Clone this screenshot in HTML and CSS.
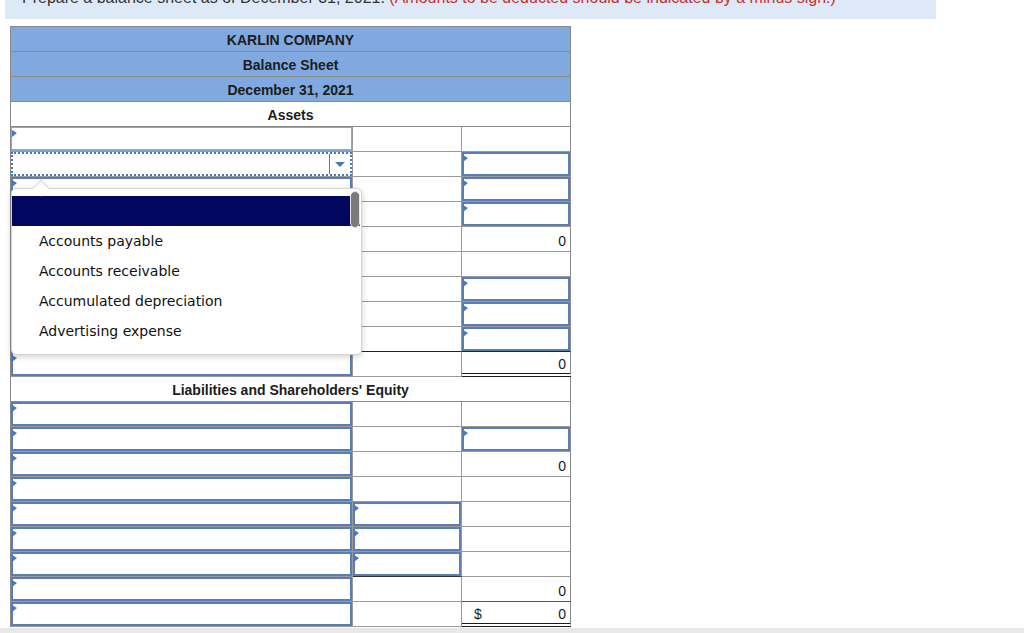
FILE: index.html
```html
<!doctype html>
<html lang="en">
  <head>
    <meta charset="UTF-8" />
    <meta name="viewport" content="width=device-width, initial-scale=1.0" />
    <title>Balance Sheet</title>
    <link rel="stylesheet" href="styles.css">
  </head>
  <body>
    <div class="prompt">
      <p>
        <span class="ask">Prepare a balance sheet as of December 31, 2021.</span>
        <span class="note">(Amounts to be deducted should be indicated by a minus sign.)</span>
      </p>
    </div>

    <div class="sheet-wrap">
      <div class="sheet">
        <div class="row head fill">KARLIN COMPANY</div>
        <div class="row head fill">Balance Sheet</div>
        <div class="row head fill">December 31, 2021</div>
        <div class="row head">Assets</div>

        <!-- assets -->
        <div class="row">
          <div class="cell"><div class="field light"></div></div>
          <div class="cell"></div>
          <div class="cell"></div>
        </div>
        <div class="row">
          <div class="cell">
            <div class="select">
              <div class="select-value"></div>
              <div class="select-arrow"><span></span></div>
            </div>
          </div>
          <div class="cell"></div>
          <div class="cell"><div class="field"></div></div>
        </div>
        <div class="row">
          <div class="cell"><div class="field"></div></div>
          <div class="cell"></div>
          <div class="cell"><div class="field"></div></div>
        </div>
        <div class="row">
          <div class="cell"><div class="field"></div></div>
          <div class="cell"></div>
          <div class="cell"><div class="field"></div></div>
        </div>
        <div class="row">
          <div class="cell"><div class="field"></div></div>
          <div class="cell"></div>
          <div class="cell num">0</div>
        </div>
        <div class="row">
          <div class="cell"><div class="field"></div></div>
          <div class="cell"></div>
          <div class="cell"></div>
        </div>
        <div class="row">
          <div class="cell"><div class="field"></div></div>
          <div class="cell"></div>
          <div class="cell"><div class="field"></div></div>
        </div>
        <div class="row">
          <div class="cell"><div class="field"></div></div>
          <div class="cell"></div>
          <div class="cell"><div class="field"></div></div>
        </div>
        <div class="row closing">
          <div class="cell"><div class="field"></div></div>
          <div class="cell"></div>
          <div class="cell"><div class="field"></div></div>
        </div>
        <div class="row">
          <div class="cell"><div class="field"></div></div>
          <div class="cell"></div>
          <div class="cell num total">0</div>
        </div>

        <div class="row head">Liabilities and Shareholders' Equity</div>

        <!-- liabilities and equity -->
        <div class="row">
          <div class="cell"><div class="field"></div></div>
          <div class="cell"></div>
          <div class="cell"></div>
        </div>
        <div class="row">
          <div class="cell"><div class="field"></div></div>
          <div class="cell"></div>
          <div class="cell"><div class="field"></div></div>
        </div>
        <div class="row">
          <div class="cell"><div class="field"></div></div>
          <div class="cell"></div>
          <div class="cell num">0</div>
        </div>
        <div class="row">
          <div class="cell"><div class="field"></div></div>
          <div class="cell"></div>
          <div class="cell"></div>
        </div>
        <div class="row">
          <div class="cell"><div class="field"></div></div>
          <div class="cell"><div class="field"></div></div>
          <div class="cell"></div>
        </div>
        <div class="row">
          <div class="cell"><div class="field"></div></div>
          <div class="cell"><div class="field"></div></div>
          <div class="cell"></div>
        </div>
        <div class="row">
          <div class="cell"><div class="field"></div></div>
          <div class="cell dark-bottom"><div class="field"></div></div>
          <div class="cell"></div>
        </div>
        <div class="row">
          <div class="cell"><div class="field"></div></div>
          <div class="cell"></div>
          <div class="cell num">0</div>
        </div>
        <div class="row">
          <div class="cell"><div class="field"></div></div>
          <div class="cell"></div>
          <div class="cell num total grand"><span>$</span><span>0</span></div>
        </div>
      </div>

      <div class="menu" role="listbox">
        <div class="menu-scroll"></div>
        <div class="menu-item selected"></div>
        <div class="menu-item">Accounts payable</div>
        <div class="menu-item">Accounts receivable</div>
        <div class="menu-item">Accumulated depreciation</div>
        <div class="menu-item">Advertising expense</div>
      </div>
    </div>

    <div class="page-shade"></div>
  </body>
</html>
```

FILE: styles.css
```css
* {
  box-sizing: border-box;
}

body {
  margin: 0;
  padding: 0;
  background: #ffffff;
  font-family: "Liberation Sans", Arial, sans-serif;
  color: #222222;
  overflow: hidden;
}

.prompt {
  margin-left: 5px;
  width: 931px;
  height: 19px;
  background: #dde9f7;
  overflow: hidden;
}

.prompt p {
  margin: -10px 0 0 17px;
  font-size: 16px;
  line-height: 16px;
  white-space: nowrap;
}

.ask {
  color: #333333;
}

.note {
  color: #c5332d;
}

.sheet-wrap {
  position: relative;
  margin: 7px 0 0 10px;
  width: 561px;
}

.sheet {
  border-left: 1px solid #8a8a8a;
  border-top: 1px solid #8a8a8a;
}

.row {
  display: grid;
  grid-template-columns: 342px 109px 109px;
  height: 25px;
}

.row.head {
  display: flex;
  justify-content: center;
  align-items: center;
  border-right: 1px solid #8a8a8a;
  border-bottom: 1px solid #8a8a8a;
  font-size: 14px;
  font-weight: bold;
  color: #1c1c1c;
  padding-top: 1px;
}

.row.fill {
  background: #80aadf;
}

.cell {
  border-right: 1px solid #9a9a9a;
  border-bottom: 1px solid #9a9a9a;
  height: 25px;
}

.cell:last-child {
  border-right-color: #8a8a8a;
}

.row.closing .cell {
  border-bottom-color: #222222;
}

.cell.dark-bottom {
  border-bottom-color: #333333;
}

.field {
  position: relative;
  width: 100%;
  height: 100%;
  border: 2px solid #5a7db6;
  background: #ffffff;
}

.field.light {
  border: 1px solid #86a6d8;
  border-bottom-width: 2px;
}

.field::before {
  content: "";
  position: absolute;
  left: -1px;
  top: 1px;
  border-left: 5px solid #4a78bd;
  border-top: 3px solid transparent;
  border-bottom: 4px solid transparent;
}

.field.light::before {
  left: 0;
  top: 2px;
}

.select {
  display: flex;
  width: 100%;
  height: 100%;
  border: 2px dotted #4a78bd;
  background: #ffffff;
}

.select-value {
  flex: 1;
}

.select-arrow {
  width: 21px;
  border-left: 1px solid #4a78bd;
  display: flex;
  align-items: center;
  justify-content: center;
}

.select-arrow span {
  border-top: 5px solid #4a78bd;
  border-left: 5px solid transparent;
  border-right: 5px solid transparent;
  margin-top: 1px;
}

.num {
  font-size: 14px;
  line-height: 24px;
  text-align: right;
  padding: 2px 4px 0 0;
  color: #1a1a1a;
}

.num.total {
  border-bottom: 4px double #1a1a1a;
  line-height: 20px;
}

.grand {
  display: flex;
  justify-content: space-between;
  padding-left: 12px;
  border-top: 1px solid #555555;
  margin-top: -1px;
  height: 26px;
}

.menu {
  position: absolute;
  left: 1px;
  top: 162px;
  width: 351px;
  padding: 7px 0 8px;
  background: #ffffff;
  border: 1px solid #d4d4d4;
  border-radius: 5px;
  box-shadow: 0 2px 6px rgba(0, 0, 0, 0.18);
  font-family: "DejaVu Sans", Verdana, sans-serif;
  font-size: 14px;
  color: #111111;
}

.menu::before {
  content: "";
  position: absolute;
  left: 23px;
  top: -7px;
  width: 11px;
  height: 11px;
  background: #ffffff;
  border-left: 1px solid #d4d4d4;
  border-top: 1px solid #d4d4d4;
  transform: rotate(45deg);
}

.menu-item {
  height: 30px;
  line-height: 30px;
  padding-left: 27px;
  white-space: nowrap;
}

.menu-item.selected {
  background: #03065f;
  margin-right: 1px;
}

.menu-scroll {
  position: absolute;
  right: 1px;
  top: 2px;
  width: 10px;
  height: 37px;
  background: #7a7a7a;
  border: 1px solid #e6e6e6;
  border-radius: 5px;
}

.page-shade {
  margin-top: 1px;
  height: 20px;
  background: linear-gradient(#e6e6e6, #f2f2f2);
}
```
